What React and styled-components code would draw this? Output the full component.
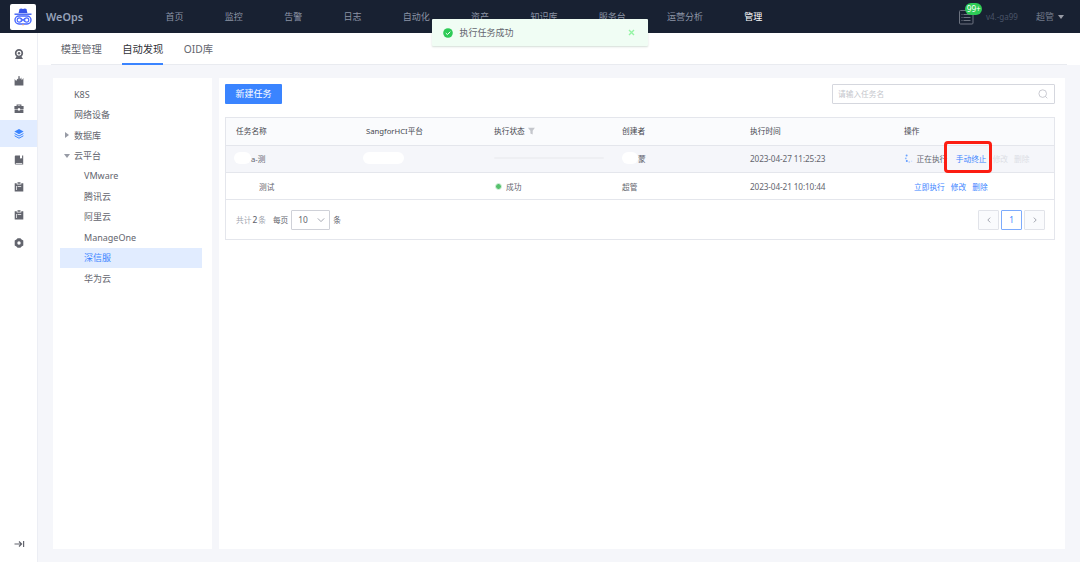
import React from 'react';
import styled, { createGlobalStyle, css } from 'styled-components';

const GlobalStyle = createGlobalStyle`
  *, *::after {
    box-sizing: border-box;
  }
  body {
    margin: 0;
    background: #f5f6fa;
    color: #63656e;
    font-family: 'Noto Sans', 'Noto Sans CJK SC', sans-serif;
    font-size: 7.7px;
    overflow: hidden;
  }
  svg {
    display: block;
    flex: none;
  }
`;

const Page = styled.div`
  position: relative;
  display: flex;
  flex-direction: column;
  width: 1080px;
  height: 562px;
`;

/* top bar */
const Header = styled.header`
  display: flex;
  align-items: center;
  flex: none;
  height: 33px;
  padding: 0 16px 0 10px;
  background: #182132;
  font-size: 9px;
  line-height: 14px;
`;

const Logo = styled.div`
  display: flex;
  align-items: center;
  justify-content: center;
  width: 26px;
  height: 26px;
  border-radius: 2px;
  background: #fff;
`;

const Brand = styled.div`
  width: 129.5px;
  padding-left: 10px;
  color: #96a2b9;
  font-size: 10.8px;
  font-weight: 600;
`;

const Nav = styled.nav`
  display: flex;
  flex: 1;
  gap: 41.3px;
  padding-top: 1px;
`;

const NavItem = styled.span`
  color: ${({ $active }) => ($active ? '#fff' : '#8c94a5')};
  white-space: nowrap;
`;

const Messages = styled.div`
  position: relative;
  width: 16px;
  margin: 1px 12px 0 0;
`;

const Count = styled.span`
  position: absolute;
  top: -6px;
  left: 7px;
  width: 17.5px;
  height: 12px;
  border-radius: 6px;
  background: #2dcb56;
  color: #fff;
  font-size: 8.2px;
  line-height: 11px;
  text-align: center;
`;

const Version = styled.span`
  width: 50px;
  padding-top: 1px;
  color: #4a5468;
  font-size: 8px;
`;

const User = styled.span`
  display: flex;
  align-items: center;
  gap: 4px;
  padding-top: 1px;
  color: #737b8b;
`;

const Caret = styled.i`
  width: 0;
  height: 0;
  border: 3px solid transparent;
  ${({ $right }) =>
    $right
      ? css`
          margin-left: 1px;
          border-right-width: 0;
          border-left: 4px solid #979ba5;
        `
      : css`
          border-bottom-width: 0;
          border-top: 4px solid #979ba5;
        `}
`;

const Body = styled.div`
  display: flex;
  flex: 1;
  min-height: 0;
`;

/* left icon rail */
const Rail = styled.aside`
  display: flex;
  flex-direction: column;
  flex: none;
  width: 38px;
  padding: 6px 0 13px;
  border-right: 1px solid #eceef4;
  background: #fff;
`;

const RailItem = styled.div`
  display: flex;
  justify-content: center;
  flex: none;
  height: 27px;
  padding: ${({ $top }) => $top}px 0 0 1px;
  background: ${({ $active }) => ($active ? '#e1ecff' : 'transparent')};
  color: ${({ $active }) => ($active ? '#3a84ff' : '#63656e')};
`;

const Collapse = styled.div`
  display: flex;
  justify-content: center;
  margin-top: auto;
  padding-left: 1px;
`;

const Main = styled.main`
  display: flex;
  flex-direction: column;
  flex: 1;
  min-width: 0;
`;

const TabBar = styled.div`
  flex: none;
  height: 32px;
  padding: 0 13px;
  background: #fff;
`;

const Tabs = styled.div`
  display: flex;
  gap: 20.3px;
  height: 32px;
  padding-left: 9.7px;
  border-bottom: 1px solid #e9ebf0;
`;

const Tab = styled.div`
  height: 32px;
  border-bottom: 2px solid ${({ $active }) => ($active ? '#3a84ff' : 'transparent')};
  color: ${({ $active }) => ($active ? '#313238' : '#63656e')};
  font-size: 10.3px;
  line-height: 32px;
  white-space: nowrap;
`;

const Content = styled.div`
  display: flex;
  flex: 1;
  gap: 7px;
  padding: 13px 15px;
`;

/* category tree */
const Tree = styled.div`
  width: 159px;
  padding: 6px 10px 0 7px;
  background: #fff;
  font-size: 9px;
`;

const TreeNode = styled.div`
  display: flex;
  align-items: center;
  height: 20.45px;
  padding-left: ${({ $child }) => ($child ? '24px' : '4px')};
  background: ${({ $active }) => ($active ? '#e1ecff' : 'transparent')};
  color: ${({ $active }) => ($active ? '#3a84ff' : '#63656e')};
`;

const Toggle = styled.span`
  display: flex;
  width: 10px;
`;

/* task list */
const Panel = styled.section`
  flex: 1;
  padding: 6px 10px 0 6px;
  background: #fff;
`;

const Toolbar = styled.div`
  display: flex;
  justify-content: space-between;
  margin-bottom: 13px;
`;

const PrimaryButton = styled.button`
  width: 57px;
  height: 20px;
  padding: 0;
  border: 0;
  border-radius: 1px;
  background: #3a84ff;
  color: #fff;
  font: inherit;
  font-size: 9px;
  line-height: 20px;
`;

const Search = styled.div`
  display: flex;
  align-items: center;
  justify-content: space-between;
  width: 223px;
  height: 20px;
  padding: 0 6px 1px 5px;
  border: 1px solid #d5d7de;
  border-radius: 1px;
  color: #c4c6cc;
`;

const Table = styled.div`
  border: 1px solid #e4e6ec;
`;

const Row = styled.div`
  display: grid;
  grid-template-columns: 130px repeat(3, 128px) 154px 1fr;
  align-items: center;
  height: ${({ $head }) => ($head ? '28px' : '27px')};
  padding: 0 0 ${({ $head, $hover }) => ($head || $hover ? 2 : 0)}px 10px;
  border-bottom: 1px solid #e4e6ec;
  background: ${({ $head, $hover }) => ($head ? '#fafbfd' : $hover ? '#f5f6fa' : '#fff')};
  color: ${({ $head }) => ($head ? '#45474f' : '#63656e')};
`;

const Cell = styled.div`
  display: flex;
  align-items: center;
  padding-left: ${({ $indent = 0 }) => $indent}px;
  white-space: nowrap;
`;

const DateText = styled.span`
  font-size: 8.2px;
  letter-spacing: -0.1px;
`;

const Mask = styled.span`
  width: ${({ $width }) => $width}px;
  height: 12px;
  margin-left: ${({ $shift = 0 }) => $shift}px;
  border-radius: 6px;
  background: #fff;
`;

const Progress = styled.div`
  width: 110px;
  height: 2px;
  border-radius: 1px;
  background: #eeeff3;
`;

const Dot = styled.span`
  width: 7px;
  height: 7px;
  margin: 0 4px 0 1px;
  border: 1px solid #dcf3e2;
  border-radius: 50%;
  background: #56c16d;
`;

const RunningText = styled.span`
  margin: 0 8.5px 0 3.5px;
`;

const LinkText = styled.a`
  margin-right: 6.1px;
  color: ${({ $disabled }) => ($disabled ? '#dcdee5' : '#3a84ff')};
`;

/* red frame drawn over the stop link */
const Marked = styled.span`
  position: relative;

  &::after {
    content: '';
    position: absolute;
    top: -12px;
    left: -12px;
    width: 48px;
    height: 32px;
    border: 3px solid #fc1d12;
    border-radius: 4px;
  }
`;

const Pagination = styled.div`
  display: flex;
  align-items: center;
  height: 39px;
  padding: 0 9px 0 10px;
`;

const Total = styled.span`
  margin-right: 7px;
  color: #a3a6af;

  b {
    margin: 0 1px;
    color: #63656e;
    font-size: 8.4px;
    font-weight: 500;
  }
`;

const PageSize = styled.div`
  display: flex;
  align-items: center;
  justify-content: space-between;
  width: 39px;
  height: 20px;
  margin: 0 3px;
  padding: 0 4px 0 6px;
  border: 1px solid #cfd1d8;
  border-radius: 1px;
  font-size: 8.4px;
`;

const Pager = styled.div`
  display: flex;
  gap: 2px;
  margin-left: auto;
`;

const PageButton = styled.span`
  display: flex;
  align-items: center;
  justify-content: center;
  width: 21px;
  height: 20px;
  border: 1px solid ${({ $active }) => ($active ? '#7dabfc' : '#e1e3e9')};
  border-radius: 1px;
  background: ${({ $active }) => ($active ? '#fff' : '#fafbfd')};
  color: ${({ $active }) => ($active ? '#3a84ff' : '#b8bbc4')};
  font-size: 8.2px;
`;

const Toast = styled.div`
  position: absolute;
  top: 19px;
  left: 432px;
  display: flex;
  align-items: center;
  width: 216px;
  height: 27px;
  padding: 0 13px 0 11px;
  border-radius: 1px;
  background: #f0fdf4;
  box-shadow: 0 1px 2px rgba(60, 100, 75, 0.22);
  font-size: 9px;
`;

const ToastText = styled.span`
  flex: 1;
  padding-left: 6.5px;
`;

const LogoIcon = () => (
  <svg width="20" height="20" viewBox="0 0 20 20" fill="none">
    <path d="M5.6 6 6.5 2Q8.2 1.2 10 2.1 11.8 1.2 13.5 2L14.4 6Z" fill="#3654e8" />
    <path d="M1.5 7.2H18.5" stroke="#3f5ff2" strokeWidth="1.4" />
    <rect x="2" y="9" width="16" height="8" rx="4" stroke="#4868ff" strokeWidth="1.4" />
    <circle cx="6.3" cy="13" r="2.1" stroke="#4868ff" strokeWidth="1.1" />
    <circle cx="13.7" cy="13" r="2.1" stroke="#4868ff" strokeWidth="1.1" />
    <path d="M8 14.6 12 11.4M8 11.4 12 14.6" stroke="#4868ff" strokeWidth="1.1" />
    <path d="M9 17.2h2L10 19z" fill="#f7a35c" />
  </svg>
);

const ListIcon = () => (
  <svg width="16" height="16" viewBox="0 0 16 16" fill="none" stroke="#6c7380">
    <rect x="1.5" y="1.5" width="13.5" height="13.5" rx="1" />
    <path d="M3.5 5.5h1M5.5 5.5h7M3.5 8.5h1M5.5 8.5h7M3.5 11.5h1M5.5 11.5h7" />
  </svg>
);

const clipboard = (
  <path
    fillRule="evenodd"
    d="M.7 1.2h2V2.6h4.6V1.2h2v8.4H.7zM3.5.2h3v1.6h-3zM2.2 4.1v4h.7v-4zM3.6 4.1v.7h3.6v-.7z"
  />
);

const railIcons = [
  {
    name: 'camera',
    top: 10,
    icon: (
      <>
        <circle cx="5" cy="4.2" r="3.3" fill="none" stroke="currentColor" strokeWidth="1.7" />
        <circle cx="5" cy="4.2" r="1.2" />
        <path d="M2.6 7.4h4.8L9 10H1z" />
      </>
    ),
  },
  {
    name: 'alarm',
    top: 10,
    icon: <path d="M.6 9.6V3L2.2 5 3.4 2.8 4.2 3.4 4.5 0h1l.4 3.4L7.2 1.4 7.8 4.2 9.4 2v7.6z" />,
  },
  {
    name: 'toolbox',
    top: 11,
    icon: (
      <path
        fillRule="evenodd"
        d="M2.6 2V.6h4.8V2H9.6v3H6.1V4.2H3.9V5H.4V2zM3.7 2h2.6v-.4H3.7zM.6 5.6h3.3v.8h2.2v-.8h3.3V9H.6z"
      />
    ),
  },
  {
    name: 'layers',
    top: 9,
    active: true,
    icon: (
      <>
        <path d="M5 0 9.6 2.6 5 5.2.4 2.6z" />
        <path d="M.6 4.6 5 7l4.4-2.4M.6 6.8 5 9.2l4.4-2.4" fill="none" stroke="currentColor" />
      </>
    ),
  },
  {
    name: 'book',
    top: 8,
    icon: (
      <path
        fillRule="evenodd"
        d="M1.6.4H6v3.4l1.1-.8 1 .8V.4h1.1v9.2H1.6A1 1 0 0 1 .8 8.7V1.2a.9.9 0 0 1 .8-.8M1.8 7.9v.8h6.4v-.8z"
      />
    ),
  },
  { name: 'clipboard', top: 8, icon: clipboard },
  { name: 'records', top: 9, icon: clipboard },
  {
    name: 'settings',
    top: 10,
    icon: (
      <path
        fillRule="evenodd"
        d="M3.6.2h2.8L7.6 1.4 9.3 2.4V7.6L7.6 8.6 6.4 9.8H3.6L2.4 8.6.7 7.6V2.4l1.7-1zM5 3.3a1.7 1.7 0 1 0 0 3.4 1.7 1.7 0 0 0 0-3.4"
      />
    ),
  },
];

const CollapseIcon = () => (
  <svg width="11" height="10" viewBox="0 0 11 10" fill="none" stroke="#63656e" strokeWidth="1.2">
    <path d="M.5 5h7M5 2.5 7.6 5 5 7.5M9.6 2v6" />
  </svg>
);

const SearchIcon = () => (
  <svg width="10" height="10" viewBox="0 0 10 10" fill="none" stroke="#bcbec6" strokeWidth="0.8">
    <circle cx="4.7" cy="4.6" r="3.8" />
    <path d="M7.4 7.4 9.3 9.3" />
  </svg>
);

const FilterIcon = () => (
  <svg width="13" height="8" viewBox="0 0 13 8" fill="#c4c6cc">
    <path d="M2.9.8h7L7.7 3.7v3.8L5.4 6.6V3.7z" />
  </svg>
);

const Spinner = () => (
  <svg width="9" height="10" viewBox="0 0 9 10">
    <circle cx="2.6" cy="2.6" r="1" fill="#6aa2ff" />
    <circle cx="1.8" cy="5.4" r=".9" fill="#8db8ff" />
    <circle cx="2.8" cy="8" r="1" fill="#5b98ff" />
    <circle cx="5.2" cy="9" r=".8" fill="#a5c6ff" />
    <circle cx="7.6" cy="8.2" r=".8" fill="#cfe0ff" />
  </svg>
);

const Chevron = ({ d }) => (
  <svg width="8" height="8" viewBox="0 0 8 8" fill="none" stroke="#a3a6b0" strokeWidth="1">
    <path d={d} />
  </svg>
);

const CheckIcon = () => (
  <svg width="10" height="10" viewBox="0 0 10 10">
    <circle cx="5" cy="5" r="4.8" fill="#2dcb56" />
    <path d="M2.8 5.1 4.4 6.6 7.3 3.7" fill="none" stroke="#fff" />
  </svg>
);

const CloseIcon = () => (
  <svg width="7" height="7" viewBox="0 0 7 7" stroke="#94f5a4" strokeWidth="1.4">
    <path d="M1 1 6 6M6 1 1 6" />
  </svg>
);

const menus = ['首页', '监控', '告警', '日志', '自动化', '资产', '知识库', '服务台', '运营分析', '管理'];
const tabs = ['模型管理', '自动发现', 'OID库'];
const columns = ['任务名称', 'SangforHCI平台', '执行状态', '创建者', '执行时间', '操作'];
const categories = [
  { label: 'K8S' },
  { label: '网络设备' },
  { label: '数据库', toggle: 'closed' },
  { label: '云平台', toggle: 'open' },
  { label: 'VMware', child: true },
  { label: '腾讯云', child: true },
  { label: '阿里云', child: true },
  { label: 'ManageOne', child: true },
  { label: '深信服', child: true },
  { label: '华为云', child: true },
];

const TopBar = () => (
  <Header>
    <Logo>
      <LogoIcon />
    </Logo>
    <Brand>WeOps</Brand>
    <Nav>
      {menus.map((menu) => (
        <NavItem key={menu} $active={menu === '管理'}>
          {menu}
        </NavItem>
      ))}
    </Nav>
    <Messages>
      <ListIcon />
      <Count>99+</Count>
    </Messages>
    <Version>v4.-ga99</Version>
    <User>
      超管
      <Caret />
    </User>
  </Header>
);

const SideRail = () => (
  <Rail>
    {railIcons.map(({ name, top, active, icon }) => (
      <RailItem key={name} $top={top} $active={active}>
        <svg width="10" height="10" viewBox="0 0 10 10" fill="currentColor">
          {icon}
        </svg>
      </RailItem>
    ))}
    <Collapse>
      <CollapseIcon />
    </Collapse>
  </Rail>
);

const CategoryTree = () => (
  <Tree>
    {categories.map(({ label, toggle, child }) => (
      <TreeNode key={label} $child={child} $active={label === '深信服'}>
        {!child && <Toggle>{toggle && <Caret $right={toggle === 'closed'} />}</Toggle>}
        {label}
      </TreeNode>
    ))}
  </Tree>
);

const TaskTable = () => (
  <Table>
    <Row $head>
      {columns.map((column) => (
        <Cell key={column}>
          {column}
          {column === '执行状态' && <FilterIcon />}
        </Cell>
      ))}
    </Row>
    <Row $hover>
      <Cell>
        <Mask $width={17} $shift={-2} />
        a-测
      </Cell>
      <Cell>
        <Mask $width={41} $shift={-3} />
      </Cell>
      <Cell>
        <Progress />
      </Cell>
      <Cell>
        <Mask $width={16} />蒙
      </Cell>
      <Cell>
        <DateText>2023-04-27 11:25:23</DateText>
      </Cell>
      <Cell>
        <Spinner />
        <RunningText>正在执行</RunningText>
        <Marked>
          <LinkText>手动终止</LinkText>
        </Marked>
        <LinkText $disabled>修改</LinkText>
        <LinkText $disabled>删除</LinkText>
      </Cell>
    </Row>
    <Row>
      <Cell $indent={23}>测试</Cell>
      <Cell />
      <Cell>
        <Dot />
        成功
      </Cell>
      <Cell>超管</Cell>
      <Cell>
        <DateText>2023-04-21 10:10:44</DateText>
      </Cell>
      <Cell $indent={10}>
        <LinkText>立即执行</LinkText>
        <LinkText>修改</LinkText>
        <LinkText>删除</LinkText>
      </Cell>
    </Row>
    <Pagination>
      <Total>
        共计<b>2</b>条
      </Total>
      每页
      <PageSize>
        10
        <Chevron d="M.8 2.4 4 5.6 7.2 2.4" />
      </PageSize>
      条
      <Pager>
        <PageButton>
          <Chevron d="M5.2 1.6 2.8 4 5.2 6.4" />
        </PageButton>
        <PageButton $active>1</PageButton>
        <PageButton>
          <Chevron d="M2.8 1.6 5.2 4 2.8 6.4" />
        </PageButton>
      </Pager>
    </Pagination>
  </Table>
);

const App = () => (
  <Page>
    <GlobalStyle />
    <TopBar />
    <Body>
      <SideRail />
      <Main>
        <TabBar>
          <Tabs>
            {tabs.map((tab) => (
              <Tab key={tab} $active={tab === '自动发现'}>
                {tab}
              </Tab>
            ))}
          </Tabs>
        </TabBar>
        <Content>
          <CategoryTree />
          <Panel>
            <Toolbar>
              <PrimaryButton>新建任务</PrimaryButton>
              <Search>
                请输入任务名
                <SearchIcon />
              </Search>
            </Toolbar>
            <TaskTable />
          </Panel>
        </Content>
      </Main>
    </Body>
    <Toast>
      <CheckIcon />
      <ToastText>执行任务成功</ToastText>
      <CloseIcon />
    </Toast>
  </Page>
);

export default App;
